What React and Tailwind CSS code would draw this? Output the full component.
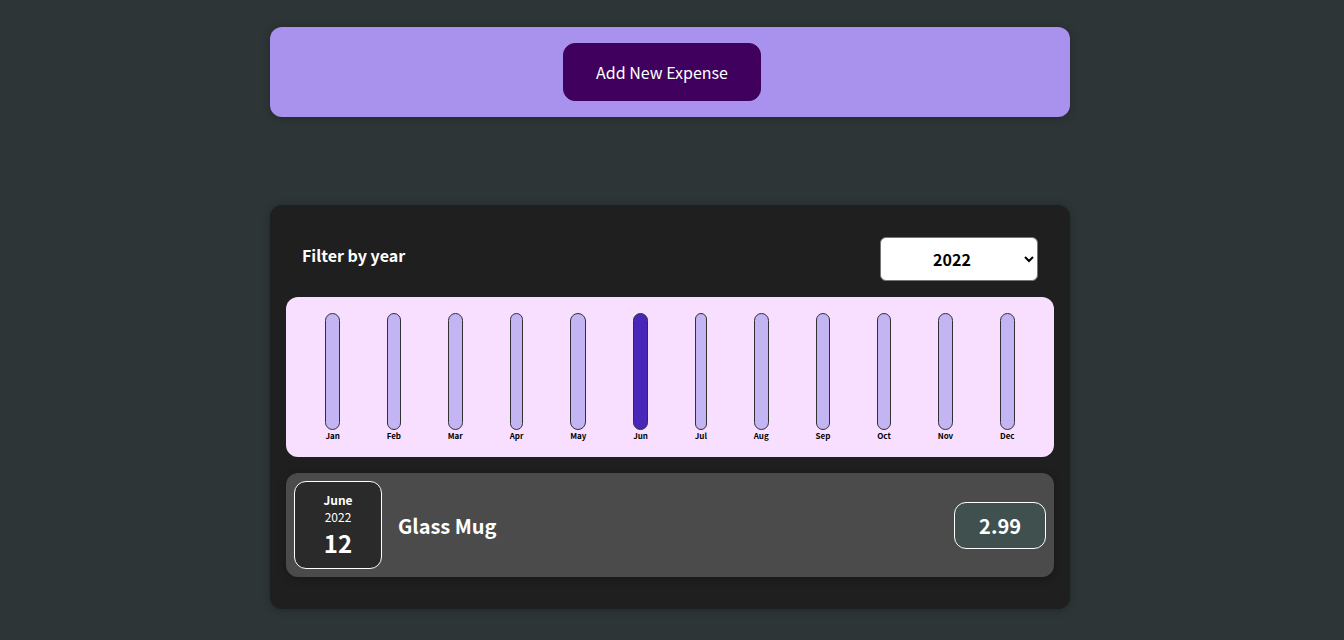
const months = ["Jan", "Feb", "Mar", "Apr", "May", "Jun", "Jul", "Aug", "Sep", "Oct", "Nov", "Dec"];

const expenses = [{ month: "June", year: 2022, day: 12, title: "Glass Mug", amount: "2.99" }];

function NewExpense() {
  return (
    <section className="flex justify-center rounded-xl bg-[#a892ee] p-4 shadow-[0_1px_8px_rgba(0,0,0,0.25)]">
      <button
        type="button"
        className="mr-4 cursor-pointer rounded-xl border border-[#40005d] bg-[#40005d] px-8 py-4 text-base leading-6 text-white"
      >
        Add New Expense
      </button>
    </section>
  );
}

function YearFilter() {
  return (
    <div className="flex items-center justify-between px-4">
      <label htmlFor="year" className="pb-2 text-base font-bold text-white">
        Filter by year
      </label>
      <select
        id="year"
        defaultValue="2022"
        className="h-11 w-[158px] rounded-md border border-[#767676] bg-white pr-1.5 pl-1 text-center text-base font-bold text-black"
      >
        <option>2022</option>
        <option>2021</option>
        <option>2020</option>
        <option>2019</option>
      </select>
    </div>
  );
}

function Chart() {
  return (
    <div className="mt-4 flex h-40 justify-around rounded-xl bg-[#f8dfff] p-4">
      {months.map((month) => (
        <div key={month} className="flex flex-col items-center">
          <div
            className={
              month === "Jun"
                ? "w-full flex-1 rounded-xl border border-[#313131] bg-[#4826b9]"
                : "w-full flex-1 rounded-xl border border-[#313131] bg-[#c3b4f3]"
            }
          />
          <div className="text-[8px] leading-[11px] font-bold text-black">{month}</div>
        </div>
      ))}
    </div>
  );
}

function ExpenseItem({ expense }) {
  return (
    <li className="flex items-center rounded-xl bg-[#4b4b4b] p-2 shadow-[0_2px_8px_rgba(0,0,0,0.25)]">
      <div className="flex size-22 flex-col items-center justify-center rounded-xl border border-white bg-[#2a2a2a] pt-0.5 text-white">
        <div className="text-xs leading-[17px] font-bold">{expense.month}</div>
        <div className="text-xs leading-[17px]">{expense.year}</div>
        <div className="text-2xl leading-9 font-bold">{expense.day}</div>
      </div>
      <h2 className="ml-4 flex-1 pt-0.5 text-xl font-bold text-white">{expense.title}</h2>
      <div className="rounded-xl border border-white bg-[#40504f] px-6 py-2 text-xl leading-[29px] font-bold text-white">
        {expense.amount}
      </div>
    </li>
  );
}

export default function App() {
  return (
    <div className="min-h-screen bg-[#2d3537] py-[27px] pr-1 font-['Noto_Sans_CJK_JP','Noto_Sans',sans-serif]">
      <main className="mx-auto max-w-[800px]">
        <NewExpense />
        <section className="mt-22 rounded-xl bg-[#1f1f1f] px-4 py-8 shadow-[0_1px_8px_rgba(0,0,0,0.25)]">
          <YearFilter />
          <Chart />
          <ul className="mt-4">
            {expenses.map((expense) => (
              <ExpenseItem key={expense.title} expense={expense} />
            ))}
          </ul>
        </section>
      </main>
    </div>
  );
}
